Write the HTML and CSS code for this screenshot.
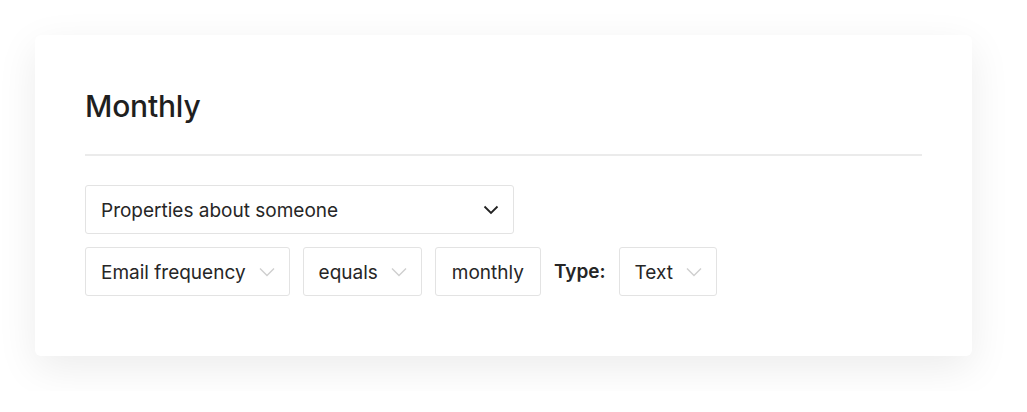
FILE: index.html
```html
<!DOCTYPE html>
<html>
<head>
<meta charset="utf-8">
<link rel="stylesheet" href="styles.css">
</head>
<body>
<div class="card">
  <h1 class="title">Monthly</h1>
  <div class="divider"></div>
  <div class="rows">
    <div class="row">
      <div class="box box-wide">
        <span>Properties about someone</span>
        <svg class="chev dark" width="16" height="10" viewBox="0 0 16 10"><path d="M1.5 1.5 L8 8 L14.5 1.5" fill="none" stroke="#222" stroke-width="1.8"/></svg>
      </div>
    </div>
    <div class="row">
      <div class="box">
        <span>Email frequency</span>
        <svg class="chev" width="16" height="10" viewBox="0 0 16 10"><path d="M1 1.5 L8 8.5 L15 1.5" fill="none" stroke="#cfcfcf" stroke-width="1.4"/></svg>
      </div>
      <div class="box">
        <span>equals</span>
        <svg class="chev" width="16" height="10" viewBox="0 0 16 10"><path d="M1 1.5 L8 8.5 L15 1.5" fill="none" stroke="#cfcfcf" stroke-width="1.4"/></svg>
      </div>
      <div class="box box-plain">
        <span>monthly</span>
      </div>
      <span class="label">Type:</span>
      <div class="box">
        <span>Text</span>
        <svg class="chev" width="16" height="10" viewBox="0 0 16 10"><path d="M1 1.5 L8 8.5 L15 1.5" fill="none" stroke="#cfcfcf" stroke-width="1.4"/></svg>
      </div>
    </div>
  </div>
</div>
</body>
</html>
```

FILE: styles.css
```css
html, body {
  margin: 0;
  padding: 0;
  background: #ffffff;
}
body {
  font-family: "Inter", "Noto Sans", sans-serif;
  color: #222222;
  padding: 35px;
}
.card {
  width: 937px;
  height: 321px;
  box-sizing: border-box;
  padding: 0 50px;
  background: #ffffff;
  border-radius: 6px;
  box-shadow: 0 12px 40px rgba(0, 0, 0, 0.08);
}
.title {
  margin: 0;
  padding-top: 53px;
  font-size: 30px;
  line-height: 36px;
  font-weight: 500;
  color: #1f1f1f;
  letter-spacing: -0.2px;
}
.divider {
  margin-top: 30px;
  height: 2px;
  background: #ebebeb;
}
.rows {
  margin-top: 29px;
  display: flex;
  flex-direction: column;
  gap: 13px;
}
.row {
  display: flex;
  align-items: center;
  gap: 13px;
}
.box {
  height: 49px;
  box-sizing: border-box;
  border: 1px solid #e3e3e3;
  border-radius: 3px;
  padding: 1px 14px 0 15px;
  display: flex;
  align-items: center;
  gap: 13px;
  font-size: 19px;
  color: #262626;
}
.box-wide {
  width: 429px;
  justify-content: space-between;
}
.box-plain {
  padding: 1px 16px 0 16px;
}
.chev {
  display: block;
}
.label {
  font-size: 19px;
  font-weight: 600;
  color: #262626;
}
```
